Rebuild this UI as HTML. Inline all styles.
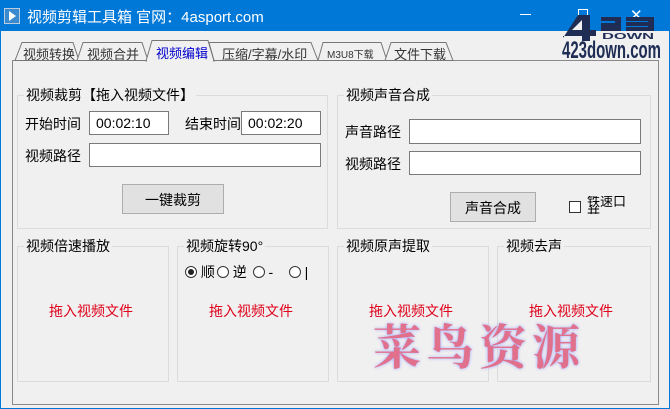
<!DOCTYPE html><html><head><meta charset="utf-8"><style>
*{margin:0;padding:0;box-sizing:border-box}
body{width:670px;height:409px;background:#f0f0f0;position:relative;overflow:hidden;font-family:"Liberation Sans","Noto Sans CJK SC",sans-serif;font-size:14px;color:#000}
.a{position:absolute}
.title{left:0;top:0;width:670px;height:31px;background:#0078d7;color:#fff}
.gb{position:absolute;border:1px solid #dcdcdc}
.gl{position:absolute;background:#f0f0f0;padding:0 2px;top:-11px;left:6px;white-space:nowrap}
.tb{position:absolute;background:#fff;border:1px solid #7a7a7a;font-size:14px;padding:3px 0 0 6px}
.btn{position:absolute;background:#e1e1e1;border:1px solid #adadad;text-align:center}
.red{position:absolute;color:#e0001a;white-space:nowrap}
.tt{position:absolute;top:44px;font-size:13px;color:#333;white-space:nowrap}
.r{display:inline-block;width:12px;height:12px;border:1px solid #333;border-radius:50%;background:#fff;vertical-align:-1px;position:relative}
</style></head><body>
<div class="a title">
 <div class="a" style="left:4px;top:8px;width:16px;height:16px;background:#3a8ad0;border:1px solid #bcd"></div>
 <div class="a" style="left:9px;top:11px;width:0;height:0;border-left:7px solid #fff;border-top:5px solid transparent;border-bottom:5px solid transparent"></div>
 <div class="a" style="left:27px;top:6px;font-size:15px">视频剪辑工具箱 官网：4asport.com</div>
 <div class="a" style="left:520px;top:14px;width:11px;height:1px;background:#fff"></div>
 <div class="a" style="left:578px;top:9px;width:10px;height:10px;border:1px solid #fff"></div>
 <div class="a" style="left:630px;top:6px;font-size:15px">✕</div>
</div>
<div class="a" style="left:0;top:31px;width:1px;height:378px;background:#0078d7"></div>
<div class="a" style="left:669px;top:31px;width:1px;height:378px;background:#0078d7"></div>
<div class="a" style="left:0;top:408px;width:670px;height:1px;background:#0078d7"></div>
<div class="a" style="left:12px;top:60px;width:647px;height:345px;border:1px solid #898989;background:#f0f0f0"></div>
<svg class="a" style="left:0;top:38px" width="470" height="24">
<g fill="#f0f0f0" stroke="#777" stroke-width="1">
<polygon points="15,22.5 22,4.5 73,4.5 79,22.5"/>
<polygon points="77,22.5 83,4.5 142,4.5 148,22.5"/>
<polygon points="214,22.5 209,4.5 311,4.5 318,22.5"/>
<polygon points="318,22.5 323,4.5 381,4.5 387,22.5"/>
<polygon points="385,22.5 391,4.5 446,4.5 453,22.5"/>
<polygon points="146,23 152,2.5 208,2.5 214,23" />
</g>
<rect x="147" y="21" width="66" height="3" fill="#f0f0f0"/>
</svg>
<div class="tt" style="left:23px">视频转换</div>
<div class="tt" style="left:87px">视频合并</div>
<div class="tt" style="left:156px;top:43px;color:#00c">视频编辑</div>
<div class="tt" style="left:222px">压缩/字幕/水印</div>
<div class="tt" style="left:327px;font-size:10px;top:46px">M3U8下载</div>
<div class="tt" style="left:394px">文件下载</div>
<svg class="a" style="left:560px;top:12px" width="105" height="52">
<g fill="#1f2d55">
<polygon points="3,26 18,3 30,3 30,18 36,18 36,24 30,24 30,29 22,29 22,24 3,24"/>
<polygon points="12,18 22,18 22,8" fill="#f0f0f0"/>
<rect x="41" y="5" width="20" height="4"/><rect x="55" y="5" width="6" height="9"/><rect x="41" y="11" width="20" height="4"/><rect x="41" y="11" width="6" height="8"/><rect x="41" y="15" width="20" height="4"/>
<rect x="66" y="5" width="28" height="4"/><rect x="66" y="10" width="28" height="4"/><rect x="66" y="15" width="28" height="4"/><rect x="88" y="5" width="6" height="14"/>
</g>
<text x="42" y="27" font-family="Liberation Sans" font-weight="bold" font-size="8" fill="#1f2d55" textLength="52" lengthAdjust="spacingAndGlyphs">DOWN</text>
<text x="2" y="46" font-family="Liberation Sans" font-weight="bold" font-size="24" fill="#1f2d55" textLength="99" lengthAdjust="spacingAndGlyphs">423down.com</text>
</svg>

<div class="gb" style="left:17px;top:95px;width:311px;height:134px"><span class="gl">视频裁剪【拖入视频文件】</span></div>
<div class="a" style="left:25px;top:114px">开始时间</div>
<div class="tb" style="left:89px;top:111px;width:80px;height:24px">00:02:10</div>
<div class="a" style="left:185px;top:114px">结束时间</div>
<div class="tb" style="left:241px;top:111px;width:80px;height:24px">00:02:20</div>
<div class="a" style="left:25px;top:146px">视频路径</div>
<div class="tb" style="left:89px;top:143px;width:232px;height:24px"></div>
<div class="btn" style="left:122px;top:184px;width:102px;height:30px;padding-top:5px">一键裁剪</div>

<div class="gb" style="left:337px;top:95px;width:314px;height:134px"><span class="gl">视频声音合成</span></div>
<div class="a" style="left:345px;top:122px">声音路径</div>
<div class="tb" style="left:409px;top:119px;width:232px;height:25px"></div>
<div class="a" style="left:345px;top:154px">视频路径</div>
<div class="tb" style="left:409px;top:151px;width:232px;height:24px"></div>
<div class="btn" style="left:450px;top:192px;width:86px;height:30px;padding-top:5px">声音合成</div>
<div class="a" style="left:569px;top:201px;width:12px;height:12px;border:1px solid #333;background:#fff"></div>
<div class="a" style="left:587px;top:196px;font-size:13px;line-height:11px;height:18px;overflow:hidden">铁速口<br>并</div>

<div class="gb" style="left:17px;top:246px;width:152px;height:136px"><span class="gl">视频倍速播放</span></div>
<div class="red" style="left:49px;top:301px">拖入视频文件</div>
<div class="gb" style="left:177px;top:246px;width:152px;height:136px"><span class="gl">视频旋转90°</span></div>
<div class="a" style="left:185px;top:262px;white-space:nowrap">
<span class="r"><span style="position:absolute;left:2px;top:2px;width:6px;height:6px;border-radius:50%;background:#222"></span></span> 顺<span class="r" style="margin-left:2px"></span> 逆 <span class="r" style="margin-left:2px"></span> -&nbsp;&nbsp;&nbsp;&nbsp;<span class="r"></span> |</div>
<div class="red" style="left:209px;top:301px">拖入视频文件</div>
<div class="gb" style="left:337px;top:246px;width:152px;height:136px"><span class="gl">视频原声提取</span></div>
<div class="red" style="left:369px;top:301px">拖入视频文件</div>
<div class="gb" style="left:497px;top:246px;width:154px;height:136px"><span class="gl">视频去声</span></div>
<div class="red" style="left:529px;top:301px">拖入视频文件</div>
<div class="a" style="left:373px;top:314px;font:bold 48px 'Noto Serif CJK SC',serif;color:#e0708c;letter-spacing:5px;text-shadow:0 0 3px #9aa0ff;white-space:nowrap;line-height:60px">菜鸟资源</div>
</body></html>
